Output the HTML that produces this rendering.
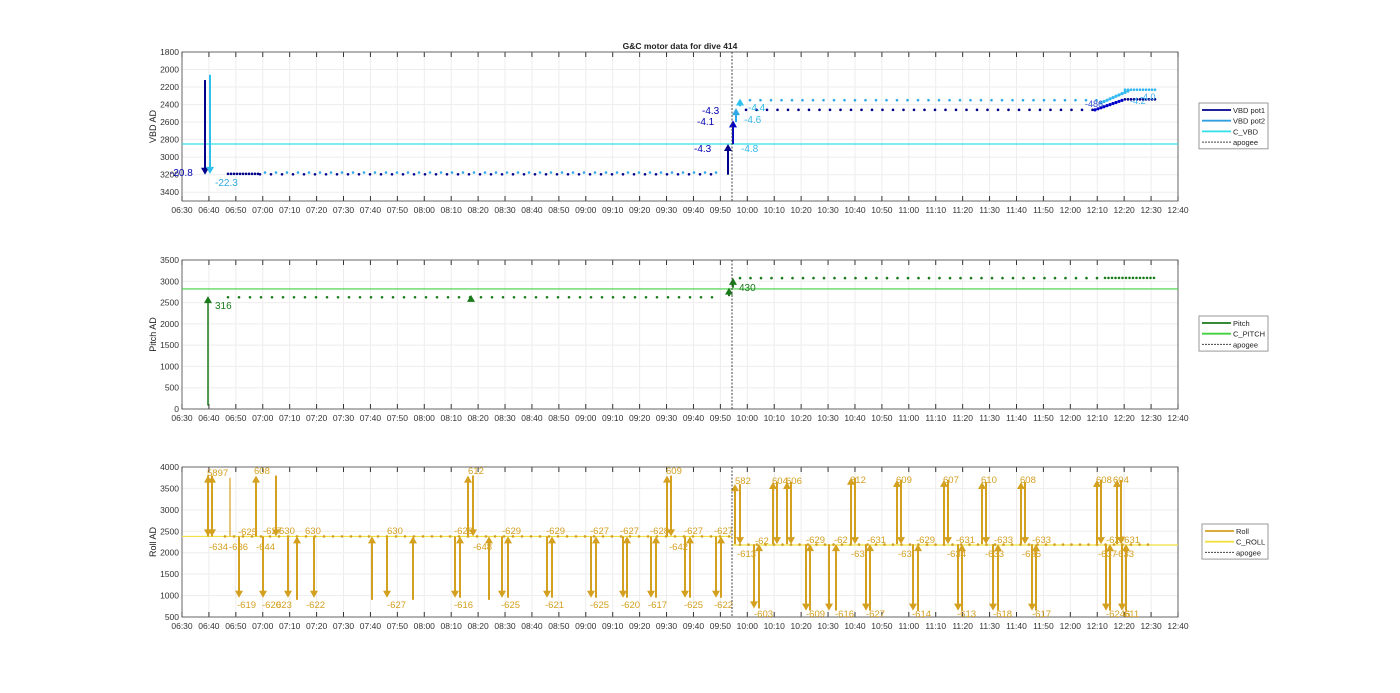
<!DOCTYPE html><html><head><meta charset="utf-8"><style>
html,body{margin:0;padding:0;background:#fff;width:1400px;height:693px;overflow:hidden}
svg{font-family:"Liberation Sans",Arial,sans-serif}
</style></head><body>
<svg id="s" width="1400" height="693" xmlns="http://www.w3.org/2000/svg"></svg>
<script>
var s=document.getElementById('s'),h='';
var L=182,R=1178,DX=(R-L)/37;
var labs=['06:30','06:40','06:50','07:00','07:10','07:20','07:30','07:40','07:50','08:00','08:10','08:20','08:30','08:40','08:50','09:00','09:10','09:20','09:30','09:40','09:50','10:00','10:10','10:20','10:30','10:40','10:50','11:00','11:10','11:20','11:30','11:40','11:50','12:00','12:10','12:20','12:30','12:40'];
function axes(top,bot,vmin,vmax,step,inv,ylab){
 var Y=function(v){var f=(v-vmin)/(vmax-vmin);return inv?top+f*(bot-top):bot-f*(bot-top);};
 h+='<rect x="'+L+'" y="'+top+'" width="'+(R-L)+'" height="'+(bot-top)+'" fill="#fff"/>';
 for(var i=0;i<=37;i++){var x=L+i*DX;h+='<line x1="'+x+'" y1="'+top+'" x2="'+x+'" y2="'+bot+'" stroke="#ededed" stroke-width="1"/>';
  h+='<line x1="'+x+'" y1="'+bot+'" x2="'+x+'" y2="'+(bot-5)+'" stroke="#333"/><line x1="'+x+'" y1="'+top+'" x2="'+x+'" y2="'+(top+5)+'" stroke="#333"/>';
  h+='<text x="'+x+'" y="'+(bot+12)+'" font-size="8.5" fill="#333" text-anchor="middle">'+labs[i]+'</text>';}
 for(var v=vmin;v<=vmax;v+=step){var y=Y(v);h+='<line x1="'+L+'" y1="'+y+'" x2="'+R+'" y2="'+y+'" stroke="#ededed"/>';
  h+='<text x="'+(L-3)+'" y="'+(y+3)+'" font-size="8.5" fill="#333" text-anchor="end">'+v+'</text>';}
 h+='<rect x="'+L+'" y="'+top+'" width="'+(R-L)+'" height="'+(bot-top)+'" fill="none" stroke="#444" stroke-width="0.8"/>';
 h+='<text transform="translate(156,'+((top+bot)/2)+') rotate(-90)" font-size="9" fill="#222" text-anchor="middle">'+ylab+'</text>';
 return Y;}
function dot(x,y,c,r){h+='<circle cx="'+x+'" cy="'+y+'" r="'+(r||1.3)+'" fill="'+c+'"/>';}
function txt(x,y,t,c,fs){h+='<text x="'+x+'" y="'+y+'" font-size="'+(fs||10)+'" fill="'+c+'">'+t+'</text>';}
function arr(x,y1,y2,c,w){var d=y2<y1?-1:1;h+='<line x1="'+x+'" y1="'+y1+'" x2="'+x+'" y2="'+(y2-d*6)+'" stroke="'+c+'" stroke-width="'+(w||2)+'"/>';
 h+='<polygon points="'+(x-4)+','+(y2-d*7)+' '+(x+4)+','+(y2-d*7)+' '+x+','+y2+'" fill="'+c+'"/>';}
var APX=732;
h+='<text x="680" y="49" font-size="8.5" font-weight="bold" fill="#222" text-anchor="middle">G&amp;C motor data for dive 414</text>';
// TOP
var Y1=axes(52,201,1800,3500,200,true,'VBD AD');
h+='<line x1="'+L+'" y1="'+Y1(2850)+'" x2="'+R+'" y2="'+Y1(2850)+'" stroke="#30e0e8" stroke-width="1.2"/>';
for(var x=260;x<720;x+=11){dot(x,Y1(3195),'#00008b');dot(x+5,Y1(3175),'#30a8e8');}
for(var x=228;x<260;x+=3){dot(x,Y1(3190),'#00008b');}
for(var x=746;x<1095;x+=10.5){dot(x,Y1(2460),'#00008b');dot(x+4,Y1(2350),'#30a8e8');}
for(var x=1095;x<1125;x+=3){dot(x,Y1(2460-(x-1095)*4),'#0000c8',1.6);dot(x+6,Y1(2380-(x-1095)*5),'#30b8f0',1.6);}
for(var x=1125;x<1158;x+=3){dot(x,Y1(2230),'#30b8f0');dot(x,Y1(2340),'#00008b');}
arr(205,Y1(2120),Y1(3200),'#00008b',2);arr(210,Y1(2060),Y1(3190),'#30c0f0',2);
txt(170,176,'-20.8','#0000b0');txt(215,186,'-22.3','#30a8e0');
arr(728,Y1(3200),Y1(2850),'#00008b');arr(733,Y1(2850),Y1(2580),'#0000c8');arr(736,Y1(2600),Y1(2440),'#30a8e8');arr(740,Y1(2420),Y1(2330),'#30c0f0');
txt(694,152,'-4.3','#0000b0');txt(697,125,'-4.1','#0000b0');txt(702,114,'-4.3','#0000b0');
txt(741,152,'-4.8','#30b8e8');txt(744,123,'-4.6','#30b8e8');txt(748,111,'-4.4','#30b8e8');
txt(1085,107,'-486','#3050d0',9);txt(1130,104,'-4.2','#40b0f0',9);txt(1140,100,'-4.0','#40b0f0',9);
h+='<line x1="'+APX+'" y1="52" x2="'+APX+'" y2="201" stroke="#444" stroke-dasharray="2,1.5"/>';
function legend(x,y,w,items){h+='<rect x="'+x+'" y="'+y+'" width="'+w+'" height="'+(items.length*10.7+3)+'" fill="#fff" stroke="#999"/>';
 items.forEach(function(it,i){var yy=y+7+i*10.7;h+='<line x1="'+(x+3)+'" y1="'+yy+'" x2="'+(x+32)+'" y2="'+yy+'" stroke="'+it[1]+'" stroke-width="'+(it[2]?1:1.8)+'"'+(it[2]?' stroke-dasharray="2,1"':'')+'/>';txt(x+34,yy+3,it[0],'#222',7.5);});}
legend(1199,103,69,[['VBD pot1','#00008b'],['VBD pot2','#30a0e0'],['C_VBD','#30e0e8'],['apogee','#444',1]]);
// MIDDLE
var Y2=axes(260,409,0,3500,500,false,'Pitch AD');
h+='<line x1="'+L+'" y1="'+Y2(2820)+'" x2="'+R+'" y2="'+Y2(2820)+'" stroke="#40d040" stroke-width="1.2"/>';
for(var x=228;x<720;x+=11)dot(x,Y2(2625),'#1a7a1a');
for(var x=740;x<1105;x+=10.5)dot(x,Y2(3075),'#1a7a1a');
for(var x=1105;x<1155;x+=3.5)dot(x,Y2(3080),'#1a7a1a');
arr(208,Y2(80),Y2(2650),'#1a7a1a',1.5);arr(471,Y2(2600),Y2(2680),'#1a7a1a');arr(729,Y2(2650),Y2(2850),'#1a7a1a');arr(733,Y2(2850),Y2(3080),'#1a7a1a');
txt(215,309,'316','#1a7a1a');txt(739,291,'430','#1a7a1a');
h+='<line x1="'+APX+'" y1="260" x2="'+APX+'" y2="409" stroke="#444" stroke-dasharray="2,1.5"/>';
legend(1199,316,69,[['Pitch','#1a7a1a'],['C_PITCH','#40d040'],['apogee','#444',1]]);
// BOTTOM
var Y3=axes(467,617,500,4000,500,false,'Roll AD');
var G='#d4a020';
h+='<line x1="'+L+'" y1="'+Y3(2380)+'" x2="'+APX+'" y2="'+Y3(2380)+'" stroke="#f0e040" stroke-width="1.2"/>';
h+='<line x1="'+APX+'" y1="'+Y3(2180)+'" x2="'+R+'" y2="'+Y3(2180)+'" stroke="#f0e040" stroke-width="1.2"/>';
for(var x=225;x<730;x+=9)dot(x,Y3(2380),G);
for(var x=740;x<1155;x+=8.5)dot(x,Y3(2190),G);
var ups=[[208,2380,3800],[212,2380,3800],[256,2380,3800],[297,900,2380],[372,900,2380],[413,900,2380],[489,900,2380],[468,2380,3800],[667,2380,3800]];
var dns=[[208,3800,2380],[212,3800,2380],[239,2380,950],[263,2380,950],[288,2380,950],[276,3800,2380],[314,2380,950],[387,2380,950],[455,2380,950],[473,3800,2380],[502,2380,950],[547,2380,950],[591,2380,950],[623,2380,950],[651,2380,950],[685,2380,950],[716,2380,950],[671,3800,2380]];
var ups2=[[460,950,2380],[508,950,2380],[552,950,2380],[596,950,2380],[627,950,2380],[656,950,2380],[690,950,2380],[721,950,2380],[735,2200,3600],[773,2200,3650],[787,2200,3650],[851,2200,3750],[897,2200,3700],[944,2200,3700],[982,2200,3650],[1021,2200,3650],[1097,2200,3700],[1117,2200,3700],[759,700,2200],[810,650,2200],[836,650,2200],[870,650,2200],[918,650,2200],[962,650,2200],[998,650,2200],[1036,650,2200],[1110,650,2200],[1126,650,2200]];
var dns2=[[754,2200,700],[806,2200,650],[829,2200,650],[866,2200,650],[913,2200,650],[958,2200,650],[993,2200,650],[1032,2200,650],[1106,2200,650],[1122,2200,650],[740,3600,2200],[777,3650,2200],[791,3650,2200],[855,3750,2200],[901,3700,2200],[948,3700,2200],[986,3650,2200],[1025,3650,2200],[1101,3700,2200],[1121,3700,2200]];
ups.concat(ups2).forEach(function(a){arr(a[0],Y3(a[1]),Y3(a[2]),G,2);});
dns.concat(dns2).forEach(function(a){arr(a[0],Y3(a[1]),Y3(a[2]),G,2);});
h+='<line x1="230" y1="'+Y3(3750)+'" x2="230" y2="'+Y3(2380)+'" stroke="'+G+'" stroke-width="1.2"/>';
var lb=[[207,476,'5897'],[254,474,'608'],[468,474,'612'],[666,474,'609'],[735,484,'582'],[772,484,'604'],[786,484,'606'],[850,483,'612'],[896,483,'609'],[943,483,'607'],[981,483,'610'],[1020,483,'608'],[1096,483,'608'],[1113,483,'604'],
[209,550,'-634'],[229,550,'-636'],[256,550,'-644'],[473,550,'-648'],[669,550,'-642'],[737,557,'-613'],
[238,535,'-625'],[263,534,'-627'],[279,534,'630'],[305,534,'630'],[387,534,'630'],[454,534,'-629'],[502,534,'-629'],[546,534,'-629'],[590,534,'-627'],[620,534,'-627'],[650,534,'-628'],[684,534,'-627'],[714,534,'-627'],
[755,544,'-62'],[806,543,'-629'],[834,543,'-62'],[867,543,'-631'],[916,543,'-629'],[956,543,'-631'],[994,543,'-633'],[1032,543,'-633'],[1106,543,'-627'],[1121,543,'-631'],
[947,557,'-634'],[985,557,'-633'],[1022,557,'-635'],[1098,557,'-637'],[1115,557,'-633'],[851,557,'-63'],[898,557,'-63'],
[237,608,'-619'],[262,608,'-620'],[276,608,'623'],[306,608,'-622'],[387,608,'-627'],[454,608,'-616'],[501,608,'-625'],[545,608,'-621'],[590,608,'-625'],[621,608,'-620'],[648,608,'-617'],[684,608,'-625'],[714,608,'-622'],
[754,617,'-603'],[806,617,'-609'],[835,617,'-616'],[866,617,'-627'],[912,617,'-614'],[957,617,'-613'],[993,617,'-618'],[1032,617,'-617'],[1106,617,'-6246'],[1124,617,'611']];
lb.forEach(function(a){txt(a[0],a[1],a[2],G,9.5);});
h+='<line x1="'+APX+'" y1="467" x2="'+APX+'" y2="617" stroke="#444" stroke-dasharray="2,1.5"/>';
legend(1202,524,66,[['Roll',G],['C_ROLL','#f0e040'],['apogee','#444',1]]);
s.innerHTML=h;
</script>
</body></html>
